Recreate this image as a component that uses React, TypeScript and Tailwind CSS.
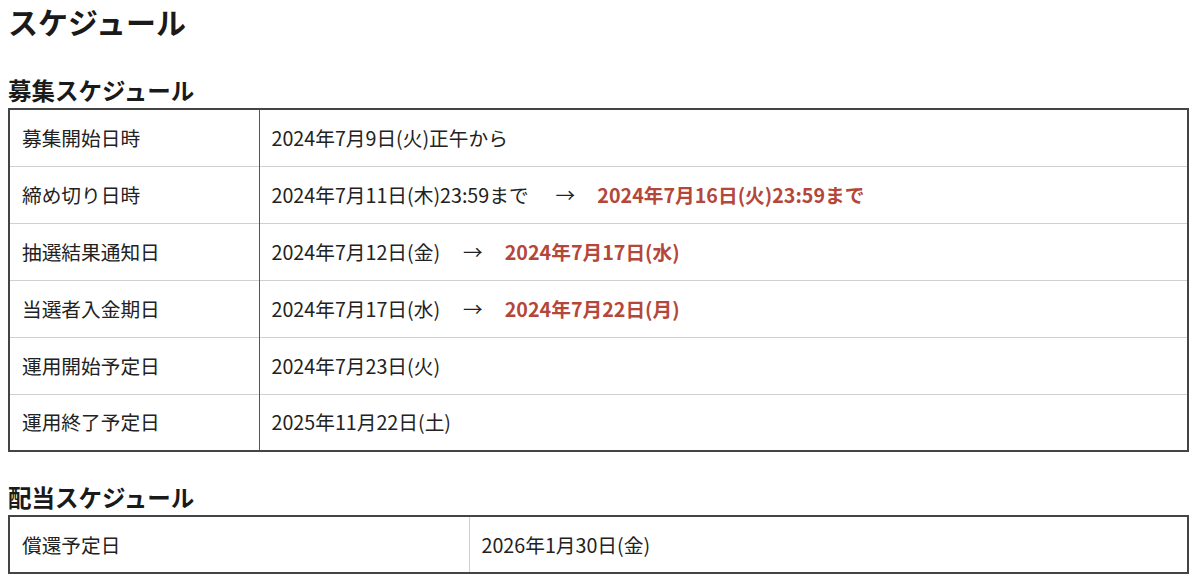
const rows: { label: string; value: string; changed?: string; wide?: boolean }[] = [
  { label: "募集開始日時", value: "2024年7月9日(火)正午から" },
  { label: "締め切り日時", value: "2024年7月11日(木)23:59まで", changed: "2024年7月16日(火)23:59まで", wide: true },
  { label: "抽選結果通知日", value: "2024年7月12日(金)", changed: "2024年7月17日(水)" },
  { label: "当選者入金期日", value: "2024年7月17日(水)", changed: "2024年7月22日(月)" },
  { label: "運用開始予定日", value: "2024年7月23日(火)" },
  { label: "運用終了予定日", value: "2025年11月22日(土)" },
];

export default function App() {
  return (
    <div
      className="bg-white text-[#222] px-2 pt-px w-[1200px] h-[580px]"
      style={{ fontFamily: '"Noto Sans CJK JP", "Noto Sans", sans-serif' }}
    >
      <h1 className="text-[30px] font-bold leading-[40px] text-[#1a1a1a]">スケジュール</h1>

      <h2 className="mt-[31px] text-[23.5px] font-bold leading-[36px] text-[#1a1a1a]">募集スケジュール</h2>
      <table className="w-[1181px] border-collapse border-2 border-[#444] text-[19.7px]">
        <tbody>
          {rows.map((r) => (
            <tr key={r.label} className="h-[57px] border-b border-[#d0d0d0] last:border-b-0">
              <td className="w-[250px] pl-[12px] border-r border-[#555] align-middle">{r.label}</td>
              <td className="pl-[12px] align-middle">
                {r.value}
                {r.changed && (
                  <>
                    <span className={r.wide ? "ml-[27px] mr-[22px]" : "ml-[23px] mr-[22px]"}>→</span>
                    <span className="font-bold text-[#b5473a]">{r.changed}</span>
                  </>
                )}
              </td>
            </tr>
          ))}
        </tbody>
      </table>

      <h2 className="mt-[27px] text-[23.5px] font-bold leading-[36px] text-[#1a1a1a]">配当スケジュール</h2>
      <table className="w-[1181px] border-collapse border-2 border-[#444] text-[19.7px]">
        <tbody>
          <tr className="h-[57px]">
            <td className="w-[460px] pl-[12px] border-r border-[#d0d0d0] align-middle">償還予定日</td>
            <td className="pl-[12px] align-middle">2026年1月30日(金)</td>
          </tr>
        </tbody>
      </table>
    </div>
  );
}
